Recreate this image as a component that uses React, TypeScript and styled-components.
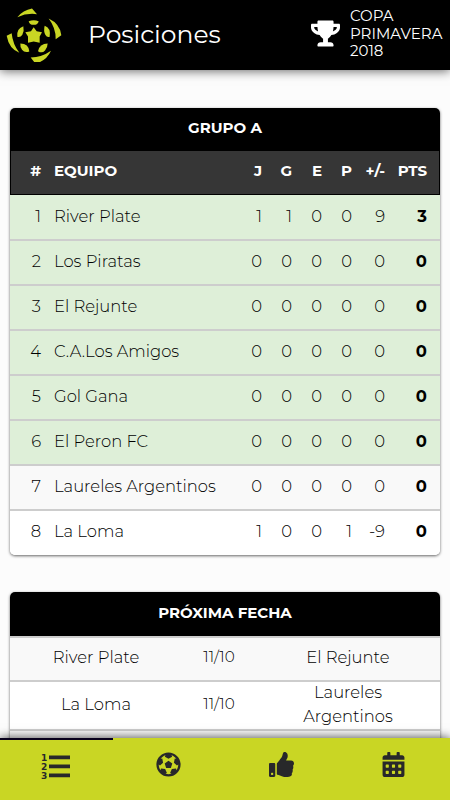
import React from "react";
import styled, { createGlobalStyle } from "styled-components";
import { FaTrophy, FaFutbol, FaThumbsUp, FaCalendarAlt } from "react-icons/fa";

const GlobalStyle = createGlobalStyle`
  * { box-sizing: border-box; }
  body {
    margin: 0;
    background: #fcfcfc;
    color: #000;
    font-family: Montserrat, Inter, sans-serif;
    font-weight: 300;
  }
`;

const Screen = styled.div`
  height: 800px;
  display: flex;
  flex-direction: column;
  overflow: hidden;
`;

const Header = styled.header`
  height: 70px;
  flex: none;
  display: flex;
  align-items: center;
  padding: 0 0 3px 6px;
  background: #000;
  color: #fff;
  box-shadow: 0 1px 10px rgba(0, 0, 0, 0.6);
  z-index: 1;
`;

const Title = styled.h1`
  flex: 1;
  margin: 0 0 0 26px;
  font-size: 25px;
  font-weight: 400;
`;

const Tournament = styled.div`
  display: flex;
  align-items: center;
  gap: 10px;
  width: 139px;
  font-size: 15px;
  font-weight: 400;
  line-height: 17.5px;
  svg { flex: none; }
`;

const Content = styled.main`
  flex: 1;
  min-height: 0;
  overflow: hidden;
  padding: 38px 10px 0;
  display: flex;
  flex-direction: column;
  gap: 37px;
`;

const Card = styled.section`
  flex: none;
  overflow: hidden;
  border-radius: 5px;
  background: #fff;
  box-shadow: 0 1px 3px rgba(0, 0, 0, 0.6);
`;

const CardTitle = styled.h2<{ $height: number }>`
  margin: 0;
  height: ${(p) => p.$height}px;
  padding-bottom: 4px;
  display: flex;
  align-items: center;
  justify-content: center;
  background: #000;
  color: #fff;
  font-size: 15px;
  font-weight: 700;
`;

const Row = styled.div<{ $tone?: string; $line?: string }>`
  height: 45px;
  padding: 0 13px 3px 0;
  display: grid;
  grid-template-columns: 31px 13px 1fr 30px 30px 30px 30px 33px 42px;
  align-items: center;
  text-align: right;
  font-size: 16.4px;
  line-height: 20px;
  background: ${(p) => p.$tone};
  & + & {
    border-top: 2px solid ${(p) => p.$line};
    margin-top: -1px;
    height: 46px;
    padding-bottom: 4px;
  }
`;

const HeadRow = styled(Row)`
  height: 44px;
  padding: 0 12px 4px 0;
  grid-template-columns: 30px 13px 1fr 30px 30px 30px 30px 33px 42px;
  border: 1px solid #000;
  border-top: 0;
  background: #363636;
  color: #fff;
  font-size: 15px;
  font-weight: 700;
`;

const Team = styled.span`
  grid-column: 3;
  text-align: left;
  white-space: nowrap;
`;

const Points = styled.strong`
  font-weight: 700;
`;

const Match = styled.div<{ $tall?: boolean; $tone: string }>`
  height: ${(p) => (p.$tall ? 49 : 44)}px;
  padding-bottom: 2px;
  display: grid;
  grid-template-columns: 172px 74px 184px;
  align-items: center;
  text-align: center;
  background: ${(p) => p.$tone};
  box-shadow: inset 0 2px #cdcdcd;
  font-size: 16.4px;
  line-height: 24px;
`;

const Opponent = styled.span`
  padding: 0 30px;
`;

const MatchDate = styled.span`
  font-size: 15.2px;
  padding-bottom: 1px;
`;

const TabBar = styled.nav`
  height: 62px;
  flex: none;
  display: grid;
  grid-template-columns: repeat(4, 1fr);
  background: #c9d624;
  box-shadow: 0 0 10px rgba(0, 0, 0, 0.75);
  z-index: 1;
`;

const Tab = styled.button<{ $active?: boolean }>`
  border: 0;
  border-top: 2px solid ${(p) => (p.$active ? "#08001c" : "#c9d624")};
  padding: 0 0 11px;
  display: flex;
  align-items: center;
  justify-content: center;
  background: none;
  color: #28282a;
`;

const Logo = () => (
  <svg width="56" height="56" viewBox="18 16.500 168 168" fill="#c9d624">
    <path d="M52 50Q69 29 96 24L111 41Q80 37 52 50z" />
    <path d="M146 54Q180 70 184 104L167 116Q168 83 146 54z" />
    <path d="M92 171Q125 171 153 151Q139 182 106 189z" />
    <path d="M20 106L35 98Q38 130 58 157Q27 145 20 106z" />
    <path d="M101 80L110 92L126 95L119 108L119 127L101 123L84 127L84 108L76 95L93 92z" />
    <path d="M86 62Q101 56 116 62Q114 73 101 73Q88 73 86 62z" />
    <path d="M134 76Q153 82 149 109Q141 112 136 103Q130 92 134 76z" />
    <path d="M70 77Q48 85 52 109Q61 112 67 103Q73 91 70 77z" />
    <path d="M61 129Q86 129 88 153Q74 158 66 148Q60 140 61 129z" />
    <path d="M143 129Q119 129 114 152Q126 160 135 150Q143 141 143 129z" />
  </svg>
);

const StandingsIcon = () => (
  <svg width="30" height="31" viewBox="0 -4 30 31" fill="currentColor">
    <g fontFamily="DejaVu Sans" fontWeight="700" fontSize="9">
      <text x="0" y="7.500">1</text>
      <text x="0" y="16.500">2</text>
      <text x="0" y="25.500">3</text>
    </g>
    <path d="M8 2.500h21v3.700H8zM8 11.500h21v3.700H8zM8 20.500h21v3.700H8z" />
  </svg>
);

const teams: [string, ...number[]][] = [
  ["River Plate", 1, 1, 0, 0, 9, 3],
  ["Los Piratas", 0, 0, 0, 0, 0, 0],
  ["El Rejunte", 0, 0, 0, 0, 0, 0],
  ["C.A.Los Amigos", 0, 0, 0, 0, 0, 0],
  ["Gol Gana", 0, 0, 0, 0, 0, 0],
  ["El Peron FC", 0, 0, 0, 0, 0, 0],
  ["Laureles Argentinos", 0, 0, 0, 0, 0, 0],
  ["La Loma", 1, 0, 0, 1, -9, 0],
];

const rowTone = (i: number) => (i < 6 ? "#deefd8" : i % 2 ? "#fff" : "#f9f9f9");
const rowLine = (i: number) => (i < 6 ? "#cdd7ca" : "#cdcdcd");

export default function App() {
  return (
    <Screen>
      <GlobalStyle />
      <Header>
        <Logo />
        <Title>Posiciones</Title>
        <Tournament>
          <FaTrophy size={29} />
          <span>COPA<br />PRIMAVERA<br />2018</span>
        </Tournament>
      </Header>
      <Content>
        <Card>
          <CardTitle $height={43}>GRUPO A</CardTitle>
          <HeadRow>
            <span>#</span>
            <Team>EQUIPO</Team>
            <span>J</span><span>G</span><span>E</span><span>P</span><span>+/-</span><span>PTS</span>
          </HeadRow>
          <div>
            {teams.map(([name, ...stats], i) => (
              <Row key={name} $tone={rowTone(i)} $line={rowLine(i)}>
                <span>{i + 1}</span>
                <Team>{name}</Team>
                {stats.slice(0, 5).map((n, k) => <span key={k}>{n}</span>)}
                <Points>{stats[5]}</Points>
              </Row>
            ))}
          </div>
        </Card>
        <Card>
          <CardTitle $height={44}>PRÓXIMA FECHA</CardTitle>
          <Match $tone="#f9f9f9">
            <Opponent>River Plate</Opponent>
            <MatchDate>11/10</MatchDate>
            <Opponent>El Rejunte</Opponent>
          </Match>
          <Match $tone="#fff" $tall>
            <Opponent>La Loma</Opponent>
            <MatchDate>11/10</MatchDate>
            <Opponent>Laureles Argentinos</Opponent>
          </Match>
          <Match $tone="#f9f9f9" />
        </Card>
      </Content>
      <TabBar>
        <Tab $active><StandingsIcon /></Tab>
        <Tab><FaFutbol size={25} /></Tab>
        <Tab><FaThumbsUp size={25} /></Tab>
        <Tab><FaCalendarAlt size={25} /></Tab>
      </TabBar>
    </Screen>
  );
}
